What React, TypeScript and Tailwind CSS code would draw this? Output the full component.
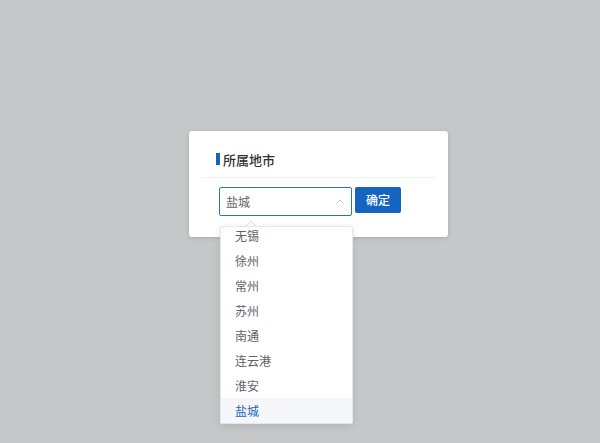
import { useState } from "react";

const cities = ["无锡", "徐州", "常州", "苏州", "南通", "连云港", "淮安", "盐城"];

const ChevronUp = () => (
  <svg width="10" height="10" viewBox="0 0 10 10" fill="none">
    <path d="M1.5 6.5 L5 3 L8.5 6.5" stroke="#c0c4cc" strokeWidth="1" />
  </svg>
);

export default function App() {
  const [city, setCity] = useState("盐城");

  return (
    <div
      className="w-[600px] h-[443px] bg-[#c6c7c9] overflow-hidden pt-[131px] pl-[189px]"
      style={{ fontFamily: '"Noto Sans CJK SC", "Noto Sans", sans-serif' }}
    >
      <div className="relative w-[259px] h-[106px] bg-white rounded-[3px] shadow-[0_1px_4px_rgba(0,0,0,0.15)] px-3 pt-[19px]">
        <div className="flex items-center pl-[15px] h-[18px]">
          <span className="w-[4px] h-[12px] bg-[#1565c0] mr-[3px]" />
          <span className="text-[13px] font-medium text-[#303133] leading-none">所属地市</span>
        </div>
        <div className="mt-[9px] border-t border-[#eef0f3]" />
        <div className="flex items-start pl-[18px] mt-[9px] gap-[3px]">
          <div className="relative w-[133px] h-[29px] border border-[#2f6fc4] rounded-[2px] flex items-center justify-between pl-[6px] pr-[6px]">
            <span className="text-[12px] text-[#606266]">{city}</span>
            <ChevronUp />
            <div className="absolute left-[0px] top-[38px] w-[133px] z-10">
              <div className="absolute -top-[4px] left-[27px] w-[8px] h-[8px] bg-white border-l border-t border-[#e4e7ed] rotate-45" />
              <div className="relative h-[198px] bg-white border border-[#e4e7ed] rounded-[2px] shadow-[0_2px_8px_rgba(0,0,0,0.1)] overflow-hidden">
                <ul className="-mt-[4px]">
                  {cities.map((c) => (
                    <li
                      key={c}
                      onClick={() => setCity(c)}
                      className={`h-[25px] flex items-center pl-[14px] text-[12px] cursor-pointer ${
                        c === city ? "bg-[#f5f7fa] text-[#1565c0]" : "text-[#606266]"
                      }`}
                    >
                      {c}
                    </li>
                  ))}
                </ul>
              </div>
            </div>
          </div>
          <button className="w-[46px] h-[26px] bg-[#1565c0] rounded-[2px] text-white text-[12px] font-medium">
            确定
          </button>
        </div>
      </div>
    </div>
  );
}
